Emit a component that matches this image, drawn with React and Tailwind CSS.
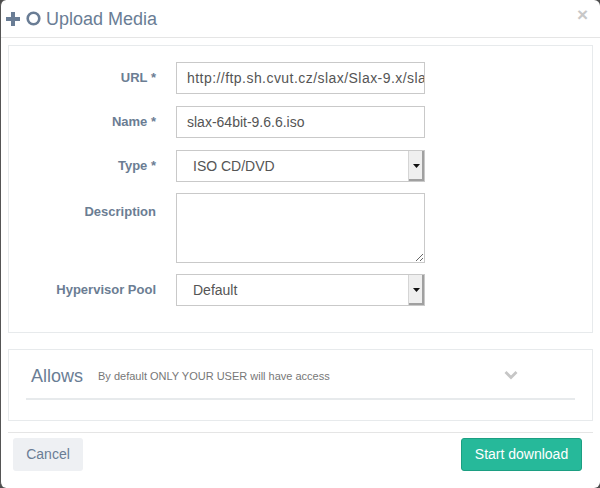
import React from "react";

function Row({ label, children, top }) {
  return (
    <div className={`flex ${top ? "items-start" : "items-center"}`}>
      <div
        className={`w-[147px] shrink-0 text-right text-[13px] font-bold text-[#6b7d93] ${top ? "pt-[9px]" : ""}`}
      >
        {label}
      </div>
      <div className="ml-[20px] w-[249px]">{children}</div>
    </div>
  );
}

function SelectBox({ value }) {
  return (
    <div className="flex h-[32px] w-full border border-[#c9c9c9] bg-white">
      <div className="flex flex-1 items-center pl-[16px] pt-[1px] text-[14px] text-[#555]">{value}</div>
      <div className="flex w-[16px] items-center justify-center border-l border-[#d5d5d5] bg-[#efefef] shadow-[inset_-2px_-2px_0_#a0a0a0]">
        <svg width="7" height="4" viewBox="0 0 7 4">
          <path d="M0 0h7L3.5 4z" fill="#111" />
        </svg>
      </div>
    </div>
  );
}

export default function App() {
  return (
    <div className="h-[488px] w-[600px] bg-[#4d4d4d] font-['Liberation_Sans',Arial,sans-serif]">
      <div className="flex h-full flex-col rounded-[6px] border-l border-[#555] bg-white">
        {/* Header */}
        <div className="relative flex h-[38px] items-center border-b border-[#e5e5e5] pl-[5px] pt-[1px]">
          <svg width="14" height="14" viewBox="0 0 14 14" className="mt-[-1px]">
            <path d="M5 0h4v5h5v4H9v5H5V9H0V5h5z" fill="#6a7d95" />
          </svg>
          <svg width="15" height="15" viewBox="0 0 15 15" className="ml-[6px] mt-[-1px]">
            <circle cx="7.5" cy="7.5" r="5.8" fill="none" stroke="#6a7d95" strokeWidth="2.6" />
          </svg>
          <span className="ml-[5px] text-[18px] text-[#6a7d95]">Upload Media</span>
          <span className="absolute right-[12px] top-[5px] text-[19px] font-bold leading-none text-[#c8c8c8]">
            ×
          </span>
        </div>

        {/* Body */}
        <div className="px-[7px] pt-[7px]">
          <div className="flex flex-col gap-[12px] border border-[#e7eaec] pb-[26px] pt-[16px]">
            <Row label="URL *">
              <div className="flex h-[32px] items-center overflow-hidden whitespace-nowrap border border-[#c9c9c9] px-[10px] text-[14px] tracking-[0.45px] text-[#555]">
                http://ftp.sh.cvut.cz/slax/Slax-9.x/slax-64bit-9.6.6.iso
              </div>
            </Row>
            <Row label="Name *">
              <div className="flex h-[32px] items-center overflow-hidden whitespace-nowrap border border-[#c9c9c9] px-[10px] text-[14px] text-[#555]">
                slax-64bit-9.6.6.iso
              </div>
            </Row>
            <Row label="Type *">
              <SelectBox value="ISO CD/DVD" />
            </Row>
            <div className="-my-[1px]">
              <Row label="Description" top>
                <textarea className="block h-[70px] w-full border border-[#c9c9c9] outline-none" />
              </Row>
            </div>
            <Row label="Hypervisor Pool">
              <SelectBox value="Default" />
            </Row>
          </div>

          <div className="mt-[16px] border border-[#e7eaec] px-[17px] pb-[20px] pt-[13px]">
            <div className="flex items-center border-b-2 border-[#e7eaec] pb-[8px] pl-[5px]">
              <span className="text-[18px] text-[#6a7d95]">Allows</span>
              <span className="ml-[15px] text-[11px] text-[#777]">
                By default ONLY YOUR USER will have access
              </span>
              <svg width="14" height="10" viewBox="0 0 14 10" className="ml-[174px] mt-[-3px]">
                <path d="M1.5 2l5.5 5.5L12.5 2" fill="none" stroke="#c6c6c6" strokeWidth="2.8" />
              </svg>
            </div>
          </div>
        </div>

        {/* Footer */}
        <div className="mx-[7px] mt-[11px] flex justify-between border-t border-[#e5e5e5] pl-[5px] pr-[11px] pt-[5px]">
          <button className="h-[33px] w-[70px] rounded-[3px] bg-[#eef0f3] text-[14px] text-[#6a7d95]">
            Cancel
          </button>
          <button className="h-[33px] w-[121px] rounded-[3px] border border-[#1c9f82] bg-[#26b99a] text-[14px] text-white">
            Start download
          </button>
        </div>
      </div>
    </div>
  );
}
